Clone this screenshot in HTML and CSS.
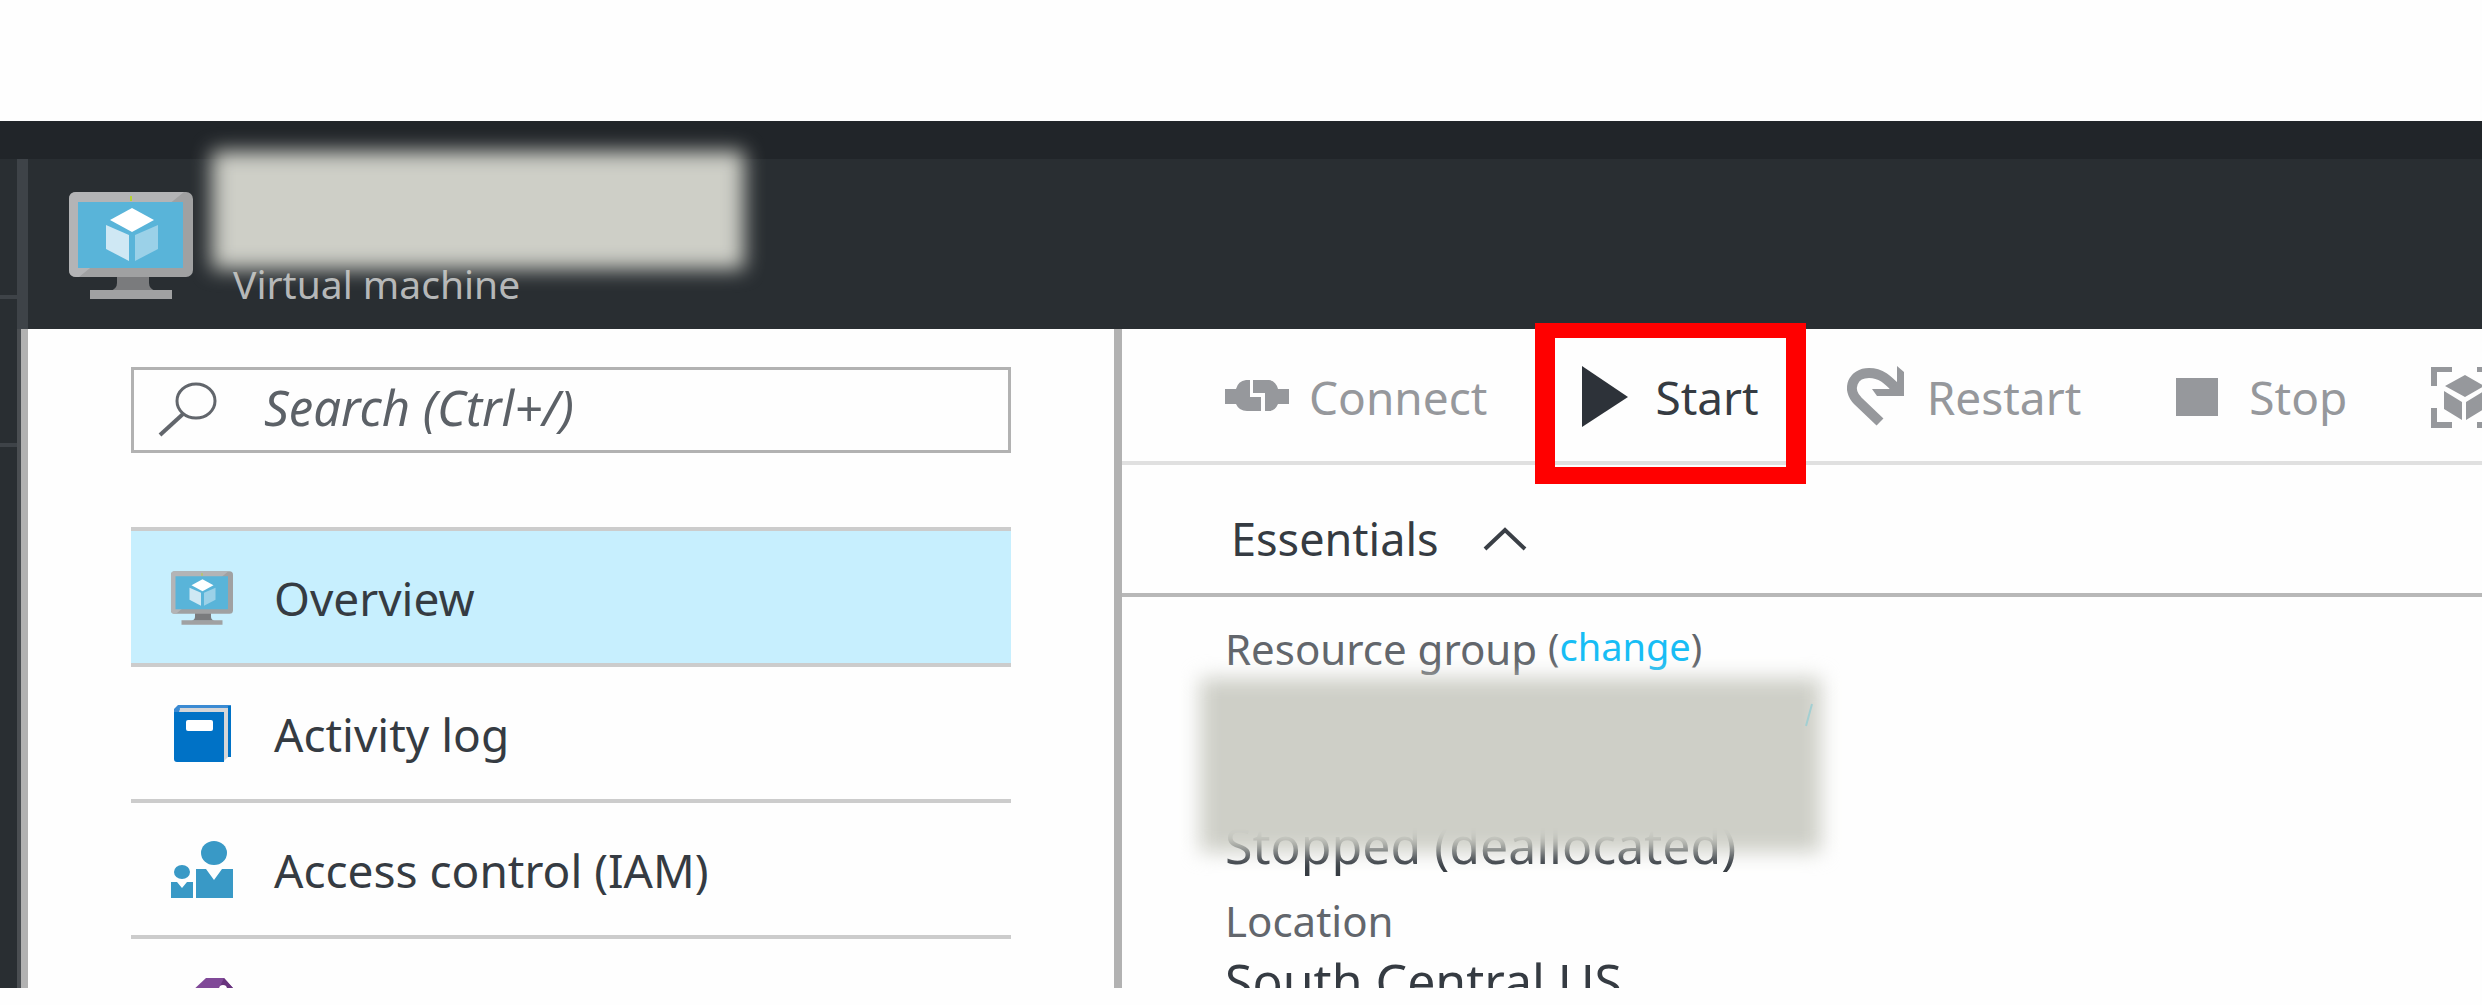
FILE: index.html
```html
<!DOCTYPE html>
<html lang="en">
<head>
<meta charset="utf-8">
<title>Virtual machine</title>
<link rel="stylesheet" href="styles.css">
</head>
<body>
<svg class="defs" aria-hidden="true">
  <symbol id="vm" viewBox="0 0 124 107">
    <path fill="#7a7b7d" d="M48 83h32v8q0 6 7 8H41q7-2 7-8z"/>
    <rect width="124" height="85" rx="7" fill="#a0a1a2"/>
    <path fill="#b3b4b6" d="M7 0h108L10 85H7q-7 0-7-7V7q0-7 7-7z"/>
    <path fill="#59b4d9" d="M9 10h105v66H9z"/>
    <path fill="#fff" d="M63 16l22 12-22 12-22-12z"/>
    <path fill="#cfe8f4" d="M37 33l23 10v26L37 57z"/>
    <path fill="#9bd1e8" d="M66 43l23-10v24L66 69z"/>
    <path fill="#b8d432" d="M61 4h2v5h-2z"/>
    <path fill="#a0a1a2" d="M21 98h82v9H21z"/>
  </symbol>
</svg>
<div class="topbar"></div>
<div class="portal">
  <div class="rail"><div class="rail-cell"></div><div class="rail-cell"></div></div>
  <section class="blade">
    <header class="blade-header">
      <svg class="vm-large"><use href="#vm"/></svg>
      <p class="subtitle">Virtual machine</p>
      <div class="redaction redaction-name"></div>
    </header>
    <div class="blade-body">
      <aside class="sidebar">
        <label class="search">
          <svg class="search-icon" viewBox="0 0 60 56" aria-hidden="true"><ellipse cx="38" cy="19" rx="19" ry="17" fill="none" stroke="#62666c" stroke-width="3"/><path d="M25 32L2 53" stroke="#62666c" stroke-width="4"/></svg>
          <input type="search" placeholder="Search (Ctrl+/)" aria-label="Search">
        </label>
        <nav class="menu">
          <a class="menu-item active" href="#overview"><svg class="menu-icon"><use href="#vm"/></svg>Overview</a>
          <a class="menu-item" href="#activity"><svg class="menu-icon" viewBox="0 0 62 62" aria-hidden="true">
            <path fill="#3b8bd3" d="M7 2h53v52h-4V6H9v6H3V6z"/><path fill="#d5d6d8" d="M9 5h48v49l-4 4V9H7z"/><path fill="#0072c6" d="M57 3h3v51h-3zM3 9h50v50H6q-3 0-3-3z"/><path fill="#3b8bd3" d="M3 9q0-4 4-5l2 2-1 3z"/><rect x="15" y="17" width="27" height="11" rx="2" fill="#fff"/></svg>Activity log</a>
          <a class="menu-item" href="#access"><svg class="menu-icon" viewBox="0 0 62 62" aria-hidden="true">
            <g fill="#3999c6"><ellipse cx="43" cy="14" rx="13" ry="12"/><ellipse cx="11" cy="33" rx="8" ry="7"/><path d="M25 30h10l8 11 8-11h11v29H25zM0 43h6l5 6 5-6h6v16H0z"/></g></svg>Access control (IAM)</a>
          <a class="menu-item" href="#tags" aria-label="Tags"><svg class="menu-icon" viewBox="0 0 62 62" aria-hidden="true">
            <path fill="#804998" d="M35 3h18l9 10v18L32 60 4 32z"/><path fill="#68347d" d="M53 3l9 10v8l-9-10-6 4z"/><circle cx="52" cy="14" r="4" fill="#fff"/></svg></a>
        </nav>
      </aside>
      <main class="content">
        <div class="toolbar">
          <button class="command" disabled><svg class="command-icon" viewBox="0 0 64 64" aria-hidden="true">
            <path fill="#96989c" d="M0 24h11q2-8 10-9h4v17h11v14H22q-8 0-11-7H0zM28 15h16q7 1 9 9h11v15H53q-3 7-9 7h-4V28H28z"/></svg>Connect</button>
          <button class="command start"><svg class="command-icon" viewBox="0 0 64 64" aria-hidden="true">
            <path fill="#2d3239" d="M11 1l46 31-46 30z"/></svg>Start<span class="highlight"></span></button>
          <button class="command" disabled><svg class="command-icon" viewBox="0 0 64 64" aria-hidden="true">
            <path fill="none" stroke="#96989c" stroke-width="10" d="M37 57L15 36C3 24 10 8 26 8c12 0 18 6 29 17"/><path fill="#96989c" d="M54 1l7 6v24H34l-5-7h17l8-5z"/></svg>Restart</button>
          <button class="command" disabled><svg class="command-icon" viewBox="0 0 64 64" aria-hidden="true">
            <path fill="#96989c" d="M11 13h42v38H11z"/></svg>Stop</button>
          <button class="command" disabled aria-label="Capture"><svg class="command-icon" viewBox="0 0 64 64" aria-hidden="true">
            <path fill="#96989c" d="M0 2h21v5H6v14H0zM46 2h18v19h-6V7H46zM0 43h6v14h15v6H0zM58 43h6v20H46v-6h12zM34 10l19 11-19 11-20-11zM13 26l18 11v18L13 44zM35 37l18-11v18L35 55z"/></svg></button>
        </div>
        <button class="essentials-toggle" aria-expanded="true">Essentials
          <svg class="chevron" viewBox="0 0 44 26" aria-hidden="true"><path d="M2 23L22 4l20 19" fill="none" stroke="#3a3f46" stroke-width="4"/></svg></button>
        <dl class="essentials">
          <div class="property"><dt>Resource group <span class="aside">(<a href="#change">change</a>)</span></dt><dd></dd></div>
          <div class="property"><dt></dt><dd>Stopped (deallocated)</dd></div>
          <div class="property"><dt>Location</dt><dd>South Central US</dd></div>
          <div class="redaction redaction-group"></div>
          <svg class="remnant" viewBox="0 0 10 24" aria-hidden="true"><path d="M8 1L2 23" stroke="#a3cfd2" stroke-width="2"/></svg>
        </dl>
      </main>
    </div>
  </section>
</div>
</body>
</html>
```
FILE: styles.css
```css
* { box-sizing: border-box; }

body {
  margin: 0;
  height: 100vh;
  padding: 121px 0 17px;
  display: flex;
  flex-direction: column;
  overflow: hidden;
  background: #fefefe;
  color: #353b42;
  font: 46px/60px "Noto Sans", "Open Sans", sans-serif;
}

.defs { position: absolute; width: 0; height: 0; }

.topbar { flex: none; height: 38px; background: #212529; }

.portal {
  flex: 1;
  min-height: 0;
  display: flex;
  background: #292e32;
}

.rail { width: 17px; flex: none; }
.rail-cell { height: 148px; border-bottom: 4px solid #3e4348; }
.rail-cell:first-child { height: 140px; }

.blade { flex: 1; min-width: 0; display: flex; flex-direction: column; }

.blade-header {
  position: relative;
  flex: none;
  height: 170px;
  padding: 33px 41px 0;
  display: flex;
  gap: 40px;
  border-left: 11px solid #3e4348;
}
.vm-large { width: 124px; height: 107px; }
.subtitle { margin: 62px 0 0; font-size: 39px; color: #b5b7b8; }

.redaction { position: absolute; background: #cecfc7; filter: blur(10px); }
.redaction-name { left: 184px; top: -8px; width: 532px; height: 118px; }

.blade-body {
  flex: 1;
  min-height: 0;
  display: grid;
  grid-template-columns: 1101fr 1360fr;
  grid-template-rows: minmax(0, 1fr);
  border-left: 4px solid #4a4e52;
}

.sidebar {
  padding: 38px 103px 0;
  overflow: hidden;
  background: #fefefe;
  border-left: 7px solid #b2b2b2;
  border-right: 8px solid #b2b2b2;
}

.search {
  height: 86px;
  padding: 0 24px;
  display: flex;
  align-items: center;
  gap: 46px;
  border: 3px solid #b2b2b2;
}
.search-icon { width: 60px; height: 56px; flex: none; }
.search input {
  flex: 1;
  min-width: 0;
  padding: 0 0 6px;
  border: 0;
  outline: 0;
  background: none;
  font: inherit;
  font-size: 49px;
  font-style: italic;
}
.search input::placeholder { color: #5c6167; opacity: 1; }

.menu { margin-top: 74px; border-top: 4px solid #ccc; }
.menu-item {
  height: 136px;
  padding: 2px 40px 0;
  display: flex;
  align-items: center;
  gap: 41px;
  border-bottom: 4px solid #ccc;
  color: inherit;
  text-decoration: none;
}
.menu-item.active { background: #c7effe; }
.menu-icon { width: 62px; height: 62px; flex: none; }

.content {
  min-width: 0;
  display: flex;
  flex-direction: column;
  background: #fefefe;
}

button {
  padding: 0;
  border: 0;
  background: none;
  color: inherit;
  font: inherit;
}

.toolbar {
  flex: none;
  height: 136px;
  padding: 4px 0 0 103px;
  display: flex;
  align-items: center;
  gap: 84px;
  border-bottom: 4px solid #e0e0e0;
}
.command { flex: none; display: flex; align-items: center; gap: 20px; }
.command:disabled { color: #96989c; }
.command-icon { width: 64px; height: 64px; overflow: visible; }
.start { position: relative; }
.highlight {
  position: absolute;
  z-index: 1;
  inset: -42px -47px -55px -36px;
  border: solid #f00;
  border-width: 15px 20px 17px;
}

.essentials-toggle {
  flex: none;
  height: 132px;
  padding: 20px 0 0 109px;
  display: flex;
  align-items: center;
  gap: 44px;
  border-bottom: 4px solid #b8b8b8;
  font-size: 45px;
}
.chevron { width: 44px; height: 26px; }

.essentials {
  position: relative;
  flex: 1;
  min-height: 0;
  margin: 0;
  padding: 24px 0 0 103px;
  display: flex;
  flex-direction: column;
  gap: 16px;
  overflow: hidden;
}
dt { height: 56px; font-size: 42px; line-height: 56px; color: #62666c; }
dd { height: 64px; margin: 0; font-size: 50px; line-height: 64px; }
.aside { font-size: 38px; vertical-align: 4px; line-height: 1; }
.aside a { color: #17bdf5; text-decoration: none; }
.redaction-group { left: 78px; top: 81px; width: 621px; height: 174px; }
.remnant { position: absolute; left: 682px; top: 106px; width: 10px; height: 24px; }
```
